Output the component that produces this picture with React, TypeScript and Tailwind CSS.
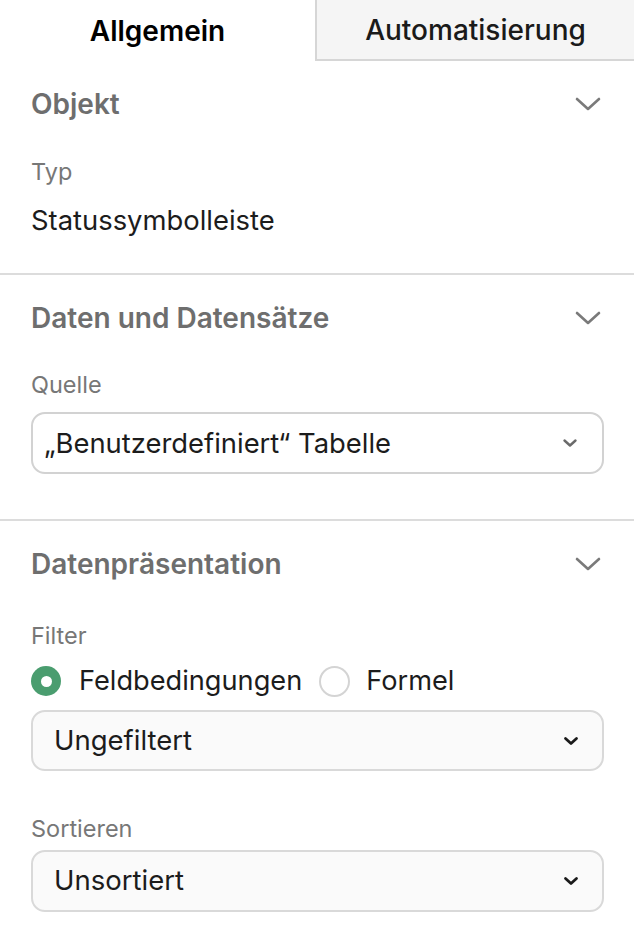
import React from "react";

const font = { fontFamily: "Inter, Roboto, 'Noto Sans', sans-serif" };

function HeaderChevron() {
  return (
    <svg width="26" height="16" viewBox="0 0 26 16" fill="none">
      <path
        d="M2 3 L13 13 L24 3"
        stroke="#7a7a7a"
        strokeWidth="2.6"
        strokeLinecap="round"
        strokeLinejoin="round"
      />
    </svg>
  );
}

function SmallChevron({ color, width }: { color: string; width: number }) {
  return (
    <svg width="16" height="10" viewBox="0 0 16 10" fill="none">
      <path
        d="M2.5 2.5 L8 7.5 L13.5 2.5"
        stroke={color}
        strokeWidth={width}
        strokeLinecap="round"
        strokeLinejoin="round"
      />
    </svg>
  );
}

function SectionHeader({ title }: { title: string }) {
  return (
    <div className="flex h-[86px] items-center justify-between">
      <span className="text-[28px] font-semibold text-[#6e6e6e]">{title}</span>
      <div className="flex w-[30px] justify-center">
        <HeaderChevron />
      </div>
    </div>
  );
}

function Label({ text, className }: { text: string; className: string }) {
  return (
    <div className={`text-[23.5px] leading-[28px] text-[#777777] ${className}`}>
      {text}
    </div>
  );
}

function Divider() {
  return <div className="h-[2px] w-full bg-[#dcdcdc]" />;
}

export default function App() {
  return (
    <div className="h-[944px] w-[634px] overflow-hidden bg-white" style={font}>
      {/* tabs */}
      <div className="flex h-[61px]">
        <div className="flex w-[315px] items-center justify-center text-[28px] font-semibold text-black">
          Allgemein
        </div>
        <div className="flex flex-1 items-center justify-center border-b-2 border-l-2 border-[#d6d6d6] bg-[#f5f5f5] text-[28px] font-medium text-[#1a1a1a]">
          Automatisierung
        </div>
      </div>

      {/* Objekt */}
      <div className="px-[31px]">
        <SectionHeader title="Objekt" />
        <Label text="Typ" className="mt-[11px]" />
        <div className="mt-[18px] text-[27.4px] leading-[32px] text-[#1c1c1c]">
          Statussymbolleiste
        </div>
      </div>
      <div className="mt-[37px]">
        <Divider />
      </div>

      {/* Daten und Datensätze */}
      <div className="px-[31px]">
        <SectionHeader title="Daten und Datensätze" />
        <Label text="Quelle" className="mt-[10px]" />
        <div className="mt-[13px] flex h-[62px] w-[573px] items-center justify-between rounded-[14px] border-2 border-[#d2d2d2] bg-white pl-[11px] pr-[24px]">
          <span className="mt-[2px] text-[27.4px] text-[#1c1c1c]">„Benutzerdefiniert“ Tabelle</span>
          <SmallChevron color="#6a6a6a" width={2.4} />
        </div>
      </div>
      <div className="mt-[45px]">
        <Divider />
      </div>

      {/* Datenpräsentation */}
      <div className="px-[31px]">
        <SectionHeader title="Datenpräsentation" />
        <Label text="Filter" className="mt-[15px]" />
        <div className="mt-[13px] flex h-[36px] items-center">
          <div className="flex h-[30px] w-[30px] items-center justify-center rounded-full bg-[#4a9d6f]">
            <div className="h-[11px] w-[11px] rounded-full bg-white" />
          </div>
          <span className="ml-[18px] text-[27.2px] text-[#1c1c1c]">Feldbedingungen</span>
          <div className="ml-[17px] h-[31px] w-[31px] rounded-full border-2 border-[#d4d4d4]" />
          <span className="ml-[16px] text-[27.2px] text-[#1c1c1c]">Formel</span>
        </div>
        <div className="mt-[11px] flex h-[61px] w-[573px] items-center justify-between rounded-[14px] border-2 border-[#d9d9d9] bg-[#fafafa] pl-[21px] pr-[23px]">
          <span className="text-[27.5px] text-[#1c1c1c]">Ungefiltert</span>
          <SmallChevron color="#1a1a1a" width={2.8} />
        </div>
        <Label text="Sortieren" className="mt-[44px]" />
        <div className="mt-[7px] flex h-[62px] w-[573px] items-center justify-between rounded-[14px] border-2 border-[#d9d9d9] bg-[#fafafa] pl-[21px] pr-[23px]">
          <span className="text-[27.5px] text-[#1c1c1c]">Unsortiert</span>
          <SmallChevron color="#1a1a1a" width={2.8} />
        </div>
      </div>
    </div>
  );
}
